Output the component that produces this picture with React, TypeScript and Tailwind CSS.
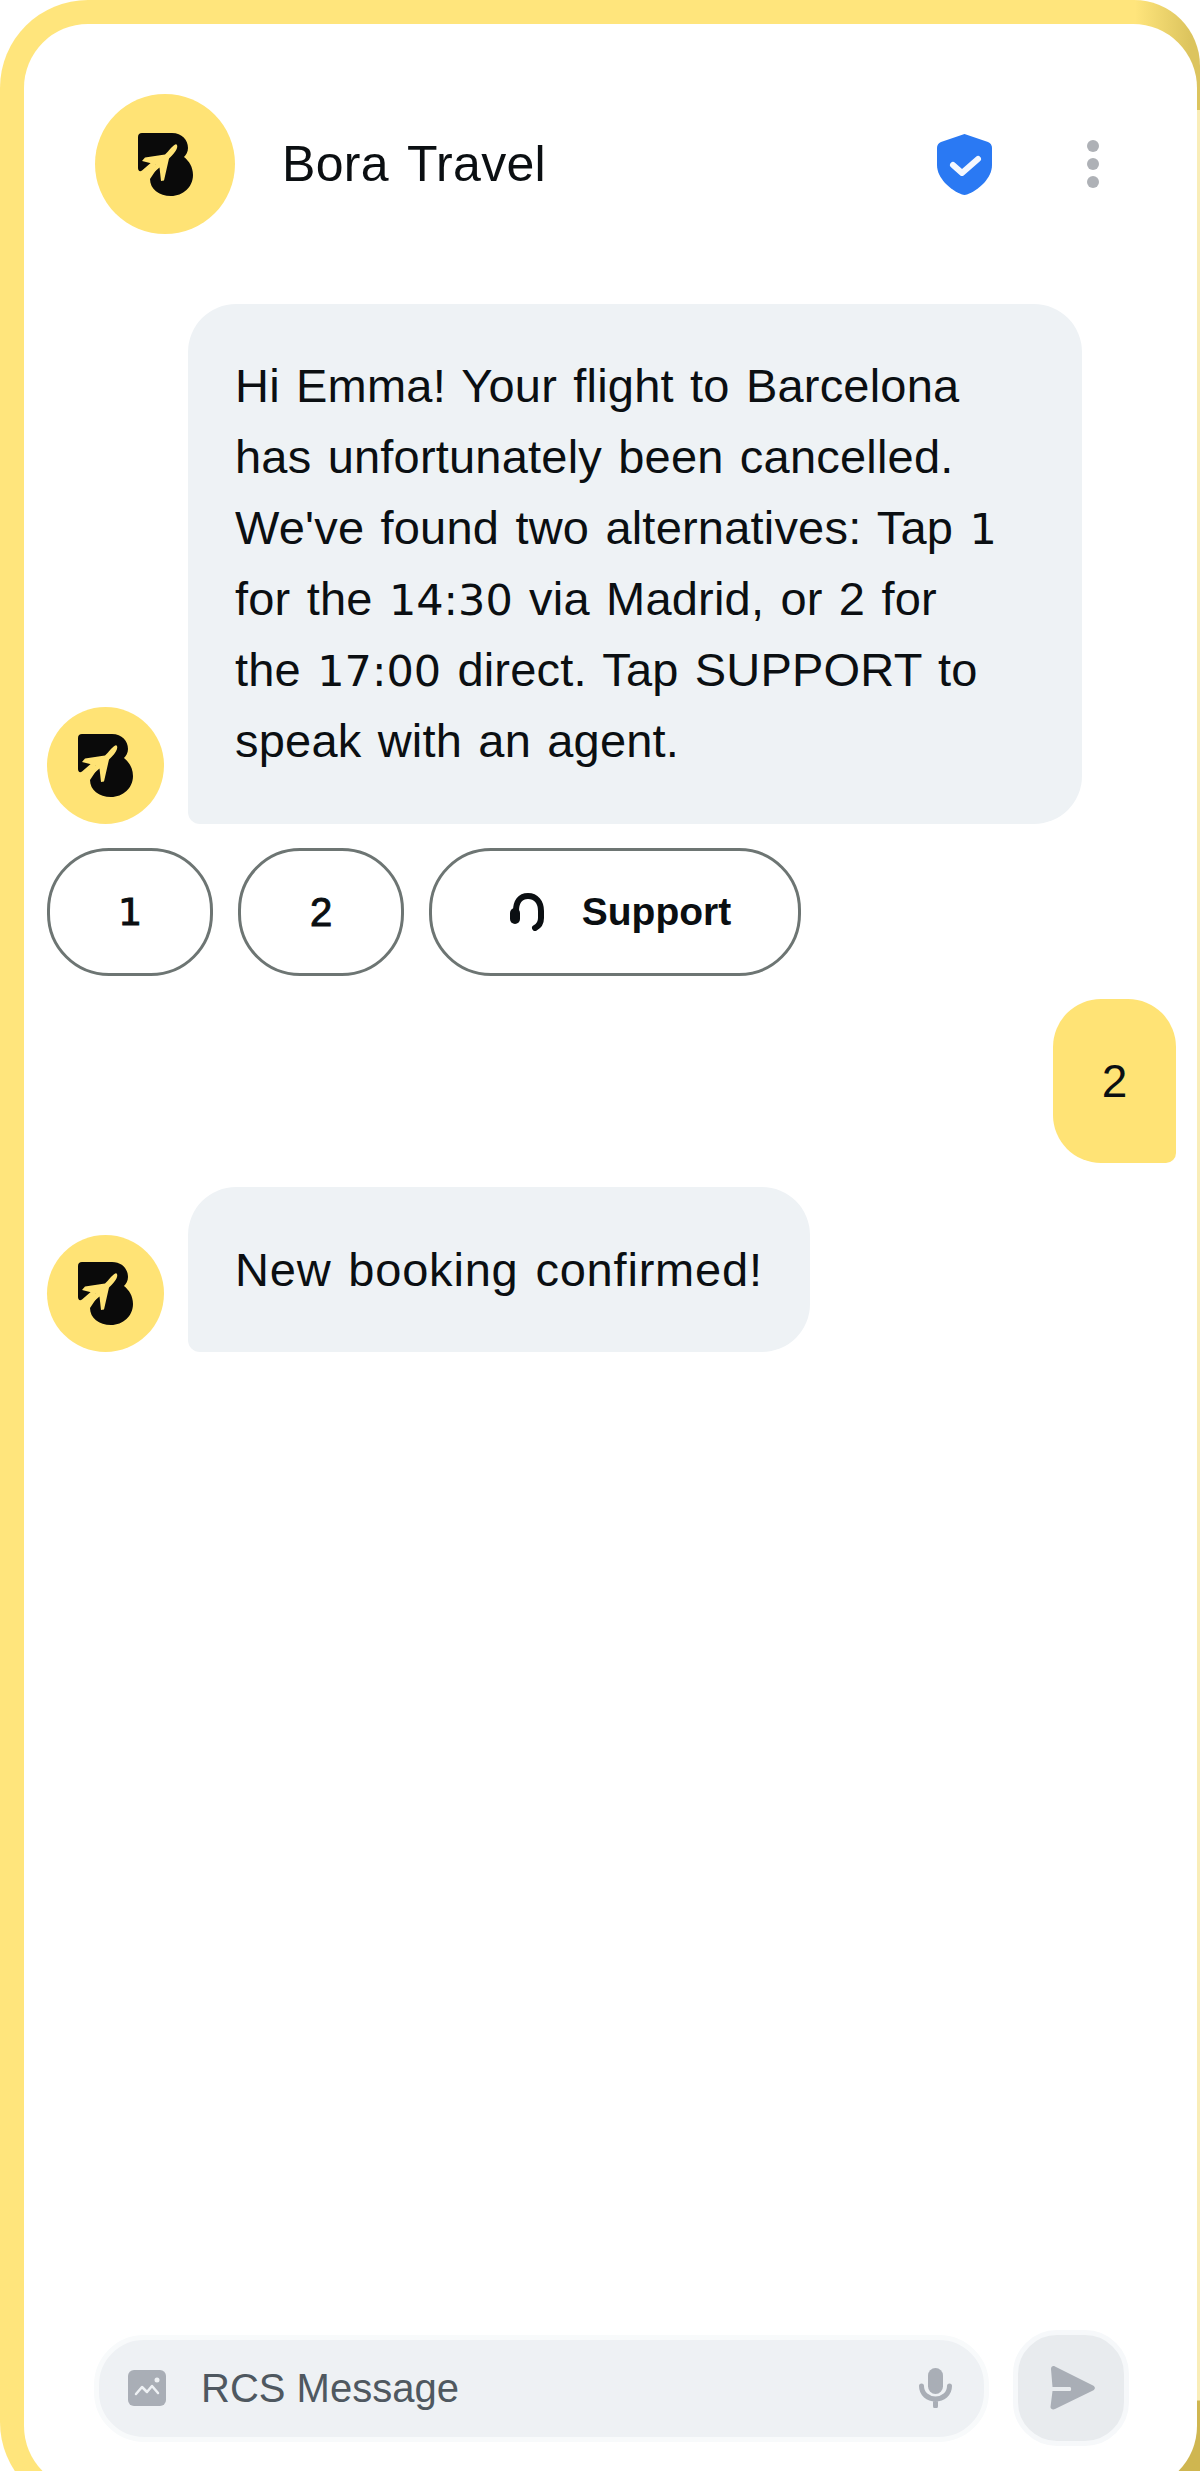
import React from "react";

const Logo = () => (
  <svg viewBox="0 0 55 63" className="w-[55px] h-[63px]">
    <path fill="#0a0a0a" d="M4 0H34C44 0 50 7 50 15C50 19 48 22 46 24C51 28 55 34 55 42C55 54 45 63 33 63C21 63 12 56 12 46L20 34L15 28L4 37.5C2 39 0 38 0 35V4C0 1.5 1.5 0 4 0Z" />
    <path fill="#ffe375" d="M38.5 11.5C40.5 13 38.5 18 34 22.5L31 25.5L26 47.5L23 48L21.5 34.5L14 41L12 39L18 31.5L4 28L7 24.5L27 21.5L30 18.5C33 15 37 10.5 38.5 11.5Z" />
  </svg>
);

const Avatar = ({ big = false }: { big?: boolean }) => (
  <div className={big ? "w-[140px] h-[140px] shrink-0 rounded-full bg-[#ffe375] flex items-center justify-center" : "w-[117px] h-[117px] shrink-0 rounded-full bg-[#ffe375] flex items-center justify-center"}>
    <Logo />
  </div>
);

const Num = ({ children }: { children: string }) => <span className="font-['DejaVu_Sans',sans-serif] text-[43px] leading-[1] tracking-normal">{children}</span>;

export default function App() {
  return (
    <div className="h-[2471px] w-[1200px] overflow-hidden bg-white font-['Liberation_Sans',Arial,sans-serif] text-[#0b0f12]">
      <div className="h-[2510px] overflow-hidden rounded-tl-[88px] rounded-tr-[66px] rounded-bl-[88px] pt-[24px] pl-[24px] pr-[3px] bg-[#ffe57c] bg-[linear-gradient(90deg,#ffe57c_1135px,#dcc45e_1190px),radial-gradient(circle_at_1200px_2471px,#cfb650_70px,transparent_71px),linear-gradient(#f9edb8,#f9edb8)] bg-no-repeat bg-[size:100%_110px,100%_100%,3px_2400px] bg-[position:0_0,0_0,100%_110px]">
        <div className="h-[2466px] rounded-[64px] bg-white flex flex-col pl-[23px] pr-[21px]">
          <header className="flex items-center pt-[70px] pl-[48px]">
            <Avatar big />
            <h1 className="ml-[47px] text-[50px] leading-[60px] font-normal tracking-[0.3px] [word-spacing:5px]">Bora Travel</h1>
            <svg viewBox="0 0 55 61" className="ml-auto w-[55px] h-[61px]">
              <path fill="#2a79f3" d="M27.5 0L51 8C53.5 9 55 11 55 14V31C55 44 42 56 30 60.5C28.5 61 26.5 61 25 60.5C13 56 0 44 0 31V14C0 11 1.5 9 4 8Z" />
              <path fill="none" stroke="#f4f8ff" strokeWidth="6" strokeLinecap="round" strokeLinejoin="round" d="M16 31L25 39L41 25" />
            </svg>
            <div className="ml-[95px] mr-[77px] flex flex-col gap-[6px]">
              <span className="block w-[12px] h-[12px] rounded-full bg-[#aeb1b6]" />
              <span className="block w-[12px] h-[12px] rounded-full bg-[#aeb1b6]" />
              <span className="block w-[12px] h-[12px] rounded-full bg-[#aeb1b6]" />
            </div>
          </header>

          <section className="mt-[70px] flex items-end gap-[24px]">
            <Avatar />
            <div className="w-[894px] rounded-[48px] rounded-bl-[12px] bg-[#eef2f5] pl-[47px] pr-[84px] pt-[46px] pb-[48px] text-[47px] leading-[71px] tracking-[0.2px] [word-spacing:3px]">
              Hi Emma! Your flight to Barcelona has unfortunately been cancelled. We've found two alternatives: Tap <Num>1</Num> for the <Num>14:30</Num> via Madrid, or 2 for the <Num>17:00</Num> direct. Tap SUPPORT to speak with an agent.
            </div>
          </section>

          <div className="mt-[24px] flex gap-[25px]">
            <button className="w-[166px] h-[128px] rounded-[62px] border-[3px] border-[#6d7573] font-['DejaVu_Sans',sans-serif] text-[38px] [-webkit-text-stroke:1px_#0b0f12]">1</button>
            <button className="w-[166px] h-[128px] rounded-[62px] border-[3px] border-[#6d7573] text-[40px] [-webkit-text-stroke:1px_#0b0f12]">2</button>
            <button className="w-[372px] h-[128px] rounded-[62px] border-[3px] border-[#6d7573] text-[39px] font-bold flex items-center justify-center gap-[34px] pl-[9px]">
              <svg viewBox="0 0 40 38" className="w-[40px] h-[38px]">
                <path fill="none" stroke="#0b0f12" strokeWidth="6" strokeLinecap="round" d="M8 22V18C8 9 12 3 20 3C28 3 33 9 33 18V25C33 30 31 33 27 35" />
                <rect x="2" y="15" width="10" height="16" rx="5" fill="#0b0f12" />
              </svg>
              <span>Support</span>
            </button>
          </div>

          <div className="mt-[23px] flex justify-end">
            <div className="w-[123px] h-[164px] rounded-[48px] rounded-br-[10px] bg-[#ffe375] flex items-center justify-center text-[46px]">2</div>
          </div>

          <section className="mt-[24px] flex items-end gap-[24px]">
            <Avatar />
            <div className="w-[622px] rounded-[48px] rounded-bl-[12px] bg-[#eef2f5] px-[47px] py-[47px] text-[47px] leading-[71px] tracking-[0.8px] [word-spacing:3px] whitespace-nowrap">New booking confirmed!</div>
          </section>

          <footer className="mt-auto pb-[44px] pl-[47px] pr-[47px] flex items-center justify-between">
            <div className="w-[895px] h-[107px] rounded-[50px] bg-[#eef1f4] border-[5px] border-[#f8fafb] flex items-center pl-[29px] pr-[32px]">
              <svg viewBox="0 0 38 36" className="w-[38px] h-[36px] shrink-0">
                <rect width="38" height="36" rx="6" fill="#a9aeb6" />
                <path fill="none" stroke="#eef1f4" strokeWidth="2.5" strokeLinecap="round" strokeLinejoin="round" d="M8 24L14 17L19 22L24 16L30 23" />
                <circle cx="29" cy="10" r="2.5" fill="#eef1f4" />
              </svg>
              <span className="ml-[35px] text-[40px] text-[#4f5860]">RCS Message</span>
              <svg viewBox="0 0 33 40" className="ml-auto w-[33px] h-[40px] shrink-0">
                <rect x="9" width="15" height="26" rx="7.5" fill="#a9aeb6" />
                <path fill="none" stroke="#a9aeb6" strokeWidth="5" strokeLinecap="round" d="M2.5 18C2.5 26 9 31 16.5 31C24 31 30.5 26 30.5 18M16.5 31V38" />
              </svg>
            </div>
            <div className="w-[116px] h-[116px] rounded-[44px] bg-[#e8ebee] border-[5px] border-[#f6f8fa] flex items-center justify-center">
              <svg viewBox="0 0 45 44" className="w-[45px] h-[44px] ml-[3px]">
                <path fill="#a9aeb6" d="M1 3C1 0.5 3 -0.5 5 0.5L43 19.5C45.5 21 45.5 23 43 24.5L5 43C3 44 0.5 43 0.5 41L2.5 25H20C21.5 25 21.5 21 20 21H2.5Z" />
              </svg>
            </div>
          </footer>
        </div>
      </div>
    </div>
  );
}
